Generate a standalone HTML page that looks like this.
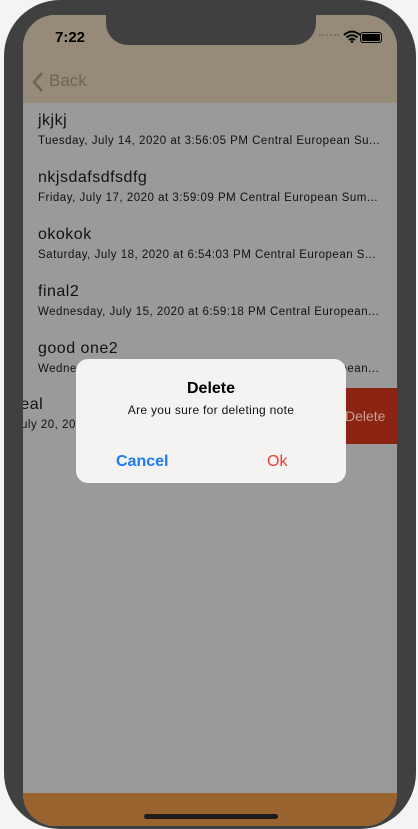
<!DOCTYPE html>
<html><head><style>
*{margin:0;padding:0;box-sizing:border-box}
body{width:418px;height:829px;overflow:hidden;background:#f4f4f4;position:relative;font-family:"Liberation Sans",sans-serif}
.frame{position:absolute;left:4px;top:0;width:412px;height:829px;background:#404040;border-radius:56px}
.screen{position:absolute;left:23px;top:15px;width:374px;height:811px;border-radius:32px;overflow:hidden;background:#9a9a9a}
.nav{position:absolute;left:0;top:0;width:374px;height:88px;background:#968b78}
.notch{position:absolute;left:83px;top:-2px;width:210px;height:32px;background:#404040;border-radius:0 0 22px 22px}
.abs{position:absolute;white-space:nowrap}
.t{font-size:16px;color:#111;letter-spacing:0.5px}
.s{font-size:11.5px;color:#111;letter-spacing:0.5px}
.bottom{position:absolute;left:0;top:778px;width:374px;height:40px;background:#996330}
.home{position:absolute;left:121px;top:799px;width:134px;height:5px;border-radius:3px;background:#1c1c1c}
.dlg{position:absolute;left:76px;top:359px;width:270px;height:124px;border-radius:12px;background:#f5f3f2}
</style></head><body>
<div class="frame"></div>
<div class="screen">
 <div class="nav"></div>
 <div class="notch"></div>
 <div class="abs" style="left:32px;top:14px;font-size:15px;font-weight:bold;color:#000">7:22</div>
 <div class="abs" style="left:296px;top:19px;width:20px;height:3px;border-top:2px dotted #7a7060"></div>
 <svg class="abs" style="left:320px;top:15px" width="18" height="13" viewBox="0 0 18 13"><path d="M1 5Q9-2 17 5M3.5 7.5Q9 3 14.5 7.5M6 10Q9 7.5 12 10" stroke="#000" stroke-width="2" fill="none"/><circle cx="9" cy="11.5" r="1.3"/></svg>
 <div class="abs" style="left:337px;top:17px;width:22px;height:11px;border:1.5px solid #000;border-radius:3px;padding:1px"><div style="width:100%;height:100%;background:#000;border-radius:1px"></div></div>
 <svg class="abs" style="left:9px;top:56px" width="12" height="22" viewBox="0 0 12 22"><path d="M10 2L2 11L10 20" stroke="#6b6555" stroke-width="2.5" fill="none"/></svg>
 <div class="abs" style="left:26px;top:56px;font-size:17px;color:#6b6555">Back</div>

 <div class="abs t" style="left:15px;top:97px">jkjkj</div>
 <div class="abs s" style="left:15px;top:120px">Tuesday, July 14, 2020 at 3:56:05 PM Central European Su...</div>
 <div class="abs t" style="left:15px;top:154px">nkjsdafsdfsdfg</div>
 <div class="abs s" style="left:15px;top:177px">Friday, July 17, 2020 at 3:59:09 PM Central European Sum...</div>
 <div class="abs t" style="left:15px;top:211px">okokok</div>
 <div class="abs s" style="left:15px;top:234px">Saturday, July 18, 2020 at 6:54:03 PM Central European S...</div>
 <div class="abs t" style="left:15px;top:268px">final2</div>
 <div class="abs s" style="left:15px;top:291px">Wednesday, July 15, 2020 at 6:59:18 PM Central European...</div>
 <div class="abs t" style="left:15px;top:325px">good one2</div>
 <div class="abs s" style="left:15px;top:348px">Wednesday, July 15, 2020 at 6:59:18 PM Central European...</div>
 <div class="abs t" style="left:-17px;top:381px">Ideal</div>
 <div class="abs s" style="left:-2px;top:404px">uly 20, 2020</div>
 <div class="abs" style="left:317px;top:373px;width:57px;height:56px;background:#8c2413"></div>
 <div class="abs" style="left:322px;top:393px;font-size:14px;color:#c9a097">Delete</div>

 <div class="bottom"></div>
 <div class="home"></div>
</div>
<div class="dlg">
 <div class="abs" style="left:0;width:270px;text-align:center;top:21px;font-size:16px;font-weight:bold;color:#000">Delete</div>
 <div class="abs" style="left:0;width:270px;text-align:center;top:44px;font-size:12px;color:#111;letter-spacing:0.3px">Are you sure for deleting note</div>
 <div class="abs" style="left:40px;top:94px;font-size:16px;font-weight:bold;color:#1c7cf0">Cancel</div>
 <div class="abs" style="left:191px;top:94px;font-size:16px;color:#f03a2e">Ok</div>
</div>
</body></html>
